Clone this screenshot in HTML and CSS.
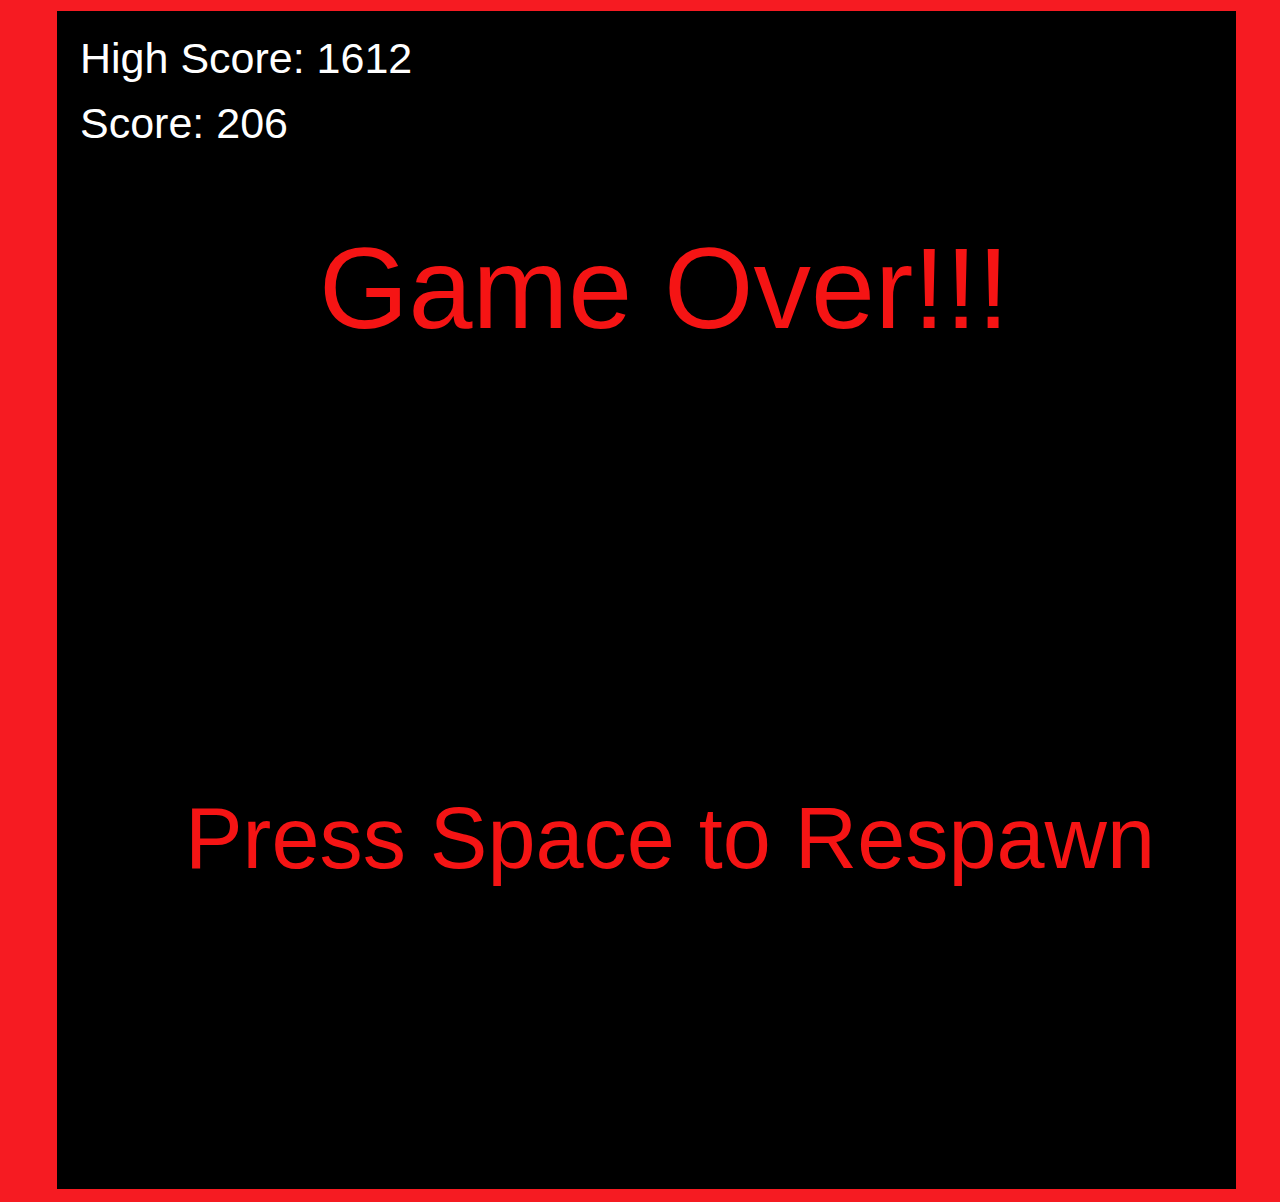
FILE: index.html
```html
<!DOCTYPE html>
<html>
<head>
<meta charset="utf-8">
<link rel="stylesheet" href="styles.css">
</head>
<body>
<main class="screen">
  <div class="scores">
    <div class="score-line">High Score: 1612</div>
    <div class="score-line">Score: 206</div>
  </div>
  <h1 class="title">Game Over!!!</h1>
  <p class="prompt">Press Space to Respawn</p>
</main>
</body>
</html>
```
FILE: styles.css
```css
html, body {
  margin: 0;
  padding: 0;
}
body {
  background: #f61b22;
  width: 1280px;
  height: 1202px;
  overflow: hidden;
  font-family: "Liberation Sans", Arial, sans-serif;
}
.screen {
  margin: 11px 0 0 57px;
  width: 1179px;
  height: 1178px;
  background: #000;
  display: flex;
  flex-direction: column;
  box-sizing: border-box;
  padding-top: 15px;
}
.scores {
  padding-left: 23px;
  color: #fff;
  font-size: 43px;
}
.score-line {
  line-height: 65px;
  height: 65px;
}
.title {
  margin: 75px 0 0 262px;
  font-size: 115px;
  line-height: 115px;
  font-weight: normal;
  color: #f51414;
  white-space: nowrap;
}
.prompt {
  margin: 449px 0 0 128px;
  font-size: 86.4px;
  line-height: 86px;
  color: #f51414;
  white-space: nowrap;
}
```
